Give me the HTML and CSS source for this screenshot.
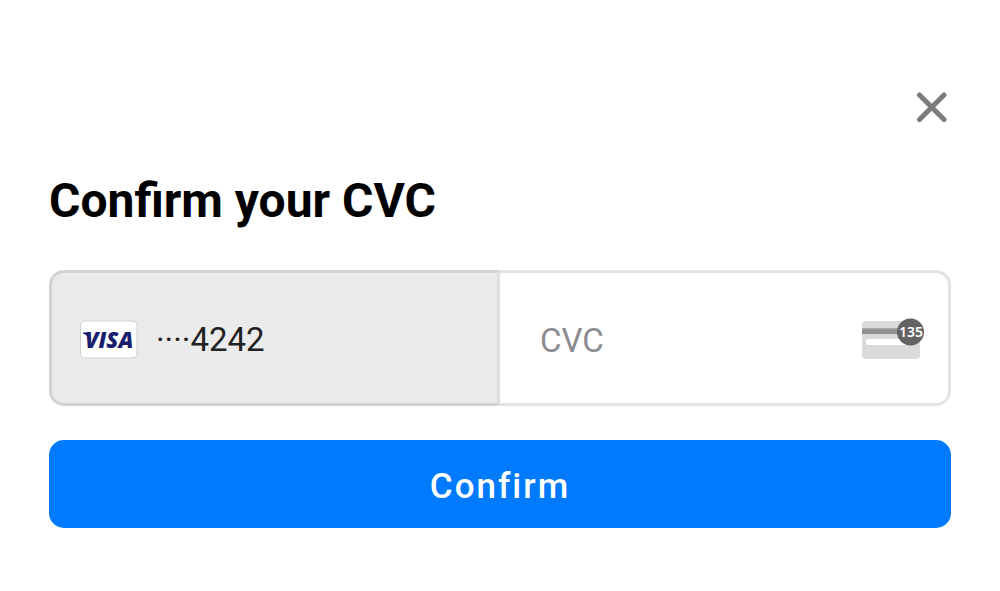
FILE: index.html
```html
<!DOCTYPE html>
<html lang="en">
<head>
<meta charset="utf-8">
<meta name="viewport" content="width=device-width, initial-scale=1">
<title>Confirm your CVC</title>
<link rel="stylesheet" href="styles.css">
</head>
<body>
<main class="sheet">
  <header class="sheet-top">
    <button class="close" type="button" aria-label="Close">
      <svg class="close-icon" viewBox="0 0 32 32" aria-hidden="true"><path d="M3.500 4 28 28.500M28 4 3.500 28.500"/></svg>
    </button>
  </header>
  <h1 class="title">Confirm your CVC</h1>
  <form class="form">
    <div class="fields">
      <div class="card">
        <svg class="brand" viewBox="0 0 58 39" role="img" aria-label="Visa">
          <rect class="brand-plate" x="0.500" y="1" width="56.500" height="37" rx="4"/>
          <path class="brand-mark" d="M3 12.400H9.500L11 20H9.500Q7.500 14.800 3 13.500Z"/>
          <text class="brand-name" x="5" y="28">VISA</text>
        </svg>
        <span class="number">····4242</span>
      </div>
      <label class="cvc">
        <input class="cvc-input" type="text" inputmode="numeric" maxlength="4" placeholder="CVC" aria-label="CVC">
        <svg class="cvc-icon" viewBox="0 0 64 42" aria-hidden="true">
          <rect x="1" y="3" width="58" height="38" rx="4" fill="#dadada"/>
          <rect x="1" y="10" width="40" height="6" fill="#8f8f8f"/>
          <rect x="1" y="10" width="40" height="1.500" fill="#a8a8a8"/>
          <rect x="5" y="21" width="50" height="6" rx="2" fill="#fff"/>
          <circle cx="49.500" cy="14" r="13.500" fill="#636363"/>
          <text class="cvc-digits" x="50" y="19">135</text>
        </svg>
      </label>
    </div>
    <button class="confirm" type="submit">Confirm</button>
  </form>
</main>
</body>
</html>
```
FILE: styles.css
```css
* {
  box-sizing: border-box;
}

body {
  margin: 0;
  background: #fff;
  color: #000;
  font-family: Roboto, "Liberation Sans", sans-serif;
}

.sheet {
  padding: 84px 49px 63px;
}

.sheet-top {
  display: flex;
  justify-content: flex-end;
}

.close {
  display: flex;
  margin-right: -4px;
  padding: 7px;
  border: 0;
  background: none;
  cursor: pointer;
}

.close-icon {
  width: 32px;
  height: 32px;
  fill: none;
  stroke: #7c7c7c;
  stroke-width: 5;
  stroke-linecap: round;
}

.title {
  margin: 43px 0 41px;
  font-size: 48px;
  font-weight: 700;
  line-height: 56px;
}

.form {
  display: flex;
  flex-direction: column;
  gap: 34px;
}

.fields {
  display: grid;
  grid-template-columns: 1fr 1fr;
  font-size: 33px;
  line-height: 44px;
}

.card,
.cvc {
  display: flex;
  align-items: center;
  min-width: 0;
  padding: 43px 28px 41px;
  border: 3px solid #e2e2e4;
}

.card {
  gap: 18px;
  border-color: #d2d2d2;
  border-right-color: #dfdfe1;
  border-radius: 15px 0 0 15px;
  background: #ebebeb;
  color: #222;
}

.cvc {
  padding-right: 23px;
  padding-left: 40px;
  border-left: 0;
  border-radius: 0 15px 15px 0;
}

.brand {
  flex: none;
  width: 58px;
  height: 39px;
}

.brand-plate {
  fill: #fff;
  stroke: #d0d0d0;
  stroke-width: 1;
}

.brand-mark {
  fill: #191e6e;
}

.brand-name {
  fill: #191e6e;
  font-family: "Open Sans", sans-serif;
  font-size: 22px;
  font-style: italic;
  font-weight: 800;
}

.number {
  padding-top: 2px;
}

.cvc-input {
  flex: 1;
  min-width: 0;
  height: 46px;
  padding: 2px 0 0;
  border: 0;
  outline: 0;
  background: none;
  color: #222;
  font: inherit;
}

.cvc-input::placeholder {
  color: #8c8c90;
  opacity: 1;
}

.cvc-icon {
  flex: none;
  width: 64px;
  height: 42px;
}

.cvc-digits {
  fill: #fff;
  font-family: "Noto Sans", sans-serif;
  font-size: 14px;
  font-weight: 600;
  text-anchor: middle;
}

.confirm {
  padding: 25px 22px 19px;
  border: 0;
  border-radius: 15px;
  background: #007aff;
  color: #fff;
  font: inherit;
  font-size: 35px;
  font-weight: 500;
  line-height: 44px;
  letter-spacing: 2px;
  cursor: pointer;
}
```
